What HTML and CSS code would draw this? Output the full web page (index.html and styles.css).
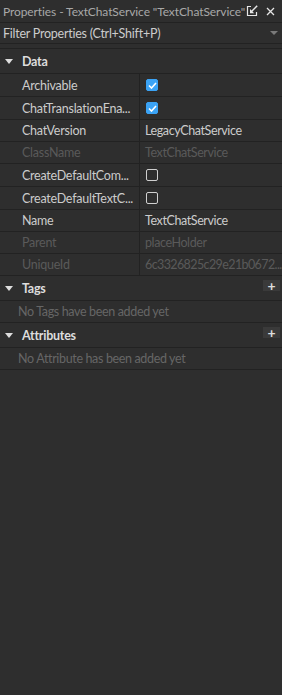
FILE: index.html
```html
<!DOCTYPE html>
<html>
<head>
<meta charset="utf-8">
<link rel="stylesheet" href="styles.css">
</head>
<body>
<div class="panel">
  <div class="titlebar">
    <span class="title">Properties - TextChatService "TextChatService"</span>
    <span class="title-icons">
      <svg class="ico" width="12" height="12" viewBox="0 0 12 12"><path d="M5 1.5H1.5V10.5H10.5V7" fill="none" stroke="#e6e6e6" stroke-width="1.2"/><path d="M11.2 0.8L5.5 6.5" stroke="#e6e6e6" stroke-width="1.5"/><path d="M4 4V8.2H8.2Z" fill="#e6e6e6"/></svg>
      <svg class="ico" width="9" height="9" viewBox="0 0 9 9"><path d="M1 1L8 8M8 1L1 8" stroke="#e6e6e6" stroke-width="1.3"/></svg>
    </span>
  </div>
  <div class="filter">
    <span class="ftext">Filter Properties (Ctrl+Shift+P)</span>
    <span class="drop"></span>
  </div>
  <div class="gap"></div>
  <div class="section">
    <span class="arrow"></span><span class="sec-title">Data</span>
  </div>
  <div class="row tall"><div class="name">Archivable</div><div class="value"><span class="cb on"><svg width="9" height="7" viewBox="0 0 9 7"><path d="M1 3.5L3.5 6L8 1" fill="none" stroke="#fff" stroke-width="1.6"/></svg></span></div></div>
  <div class="row tall"><div class="name">ChatTranslationEna...</div><div class="value"><span class="cb on"><svg width="9" height="7" viewBox="0 0 9 7"><path d="M1 3.5L3.5 6L8 1" fill="none" stroke="#fff" stroke-width="1.6"/></svg></span></div></div>
  <div class="row"><div class="name">ChatVersion</div><div class="value">LegacyChatService</div></div>
  <div class="row dis"><div class="name">ClassName</div><div class="value">TextChatService</div></div>
  <div class="row tall"><div class="name">CreateDefaultCom...</div><div class="value"><span class="cb"></span></div></div>
  <div class="row tall"><div class="name">CreateDefaultTextC...</div><div class="value"><span class="cb"></span></div></div>
  <div class="row"><div class="name">Name</div><div class="value">TextChatService</div></div>
  <div class="row dis"><div class="name">Parent</div><div class="value">placeHolder</div></div>
  <div class="row dis"><div class="name">UniqueId</div><div class="value uid">6c3326825c29e21b0672...</div></div>
  <div class="section">
    <span class="arrow"></span><span class="sec-title">Tags</span><span class="plus">+</span>
  </div>
  <div class="empty">No Tags have been added yet</div>
  <div class="section">
    <span class="arrow"></span><span class="sec-title">Attributes</span><span class="plus">+</span>
  </div>
  <div class="empty">No Attribute has been added yet</div>
</div>
</body>
</html>
```
FILE: styles.css
```css
html, body {
  margin: 0;
  padding: 0;
  background: #2e2e2e;
  height: 100%;
}
body {
  font-family: Lato, "Open Sans", sans-serif;
  font-size: 12.5px;
  letter-spacing: -0.25px;
  color: #cccccc;
}
.panel {
  width: 282px;
}
.titlebar {
  display: flex;
  align-items: center;
  padding-left: 3px;
  box-sizing: border-box;
  height: 23px;
  border-bottom: 1px solid #222;
  background: #2e2e2e;
}
.title {
  color: #a8a8a8;
  white-space: nowrap;
  flex: 1;
  font-size: 12px;
  letter-spacing: -0.1px;
}
.title-icons {
  display: flex;
  align-items: center;
  gap: 8px;
  padding-right: 7px;
}
.ico { display: block; }
.filter {
  height: 21px;
  box-sizing: border-box;
  border-bottom: 1px solid #222;
  display: flex;
  align-items: center;
  padding-left: 3px;
  padding-right: 4px;
  color: #cccccc;
}
.ftext { flex: 1; }
.drop {
  width: 0;
  height: 0;
  border-left: 4px solid transparent;
  border-right: 4px solid transparent;
  border-top: 4px solid #7a7a7a;
}
.gap {
  height: 5px;
  box-sizing: border-box;
  border-bottom: 1px solid #222;
}
.section {
  height: 25px;
  box-sizing: border-box;
  border-bottom: 1px solid #222;
  display: flex;
  align-items: center;
  padding-left: 5px;
  padding-right: 2px;
  background: #2e2e2e;
}
.arrow {
  width: 0;
  height: 0;
  border-left: 4px solid transparent;
  border-right: 4px solid transparent;
  border-top: 5px solid #dddddd;
  margin-right: 9px;
}
.sec-title {
  font-weight: bold;
  color: #dddddd;
  flex: 1;
}
.plus {
  width: 17px;
  height: 11px;
  background: #3a3a3a;
  color: #dddddd;
  font-weight: bold;
  font-size: 14px;
  line-height: 11px;
  text-align: center;
  align-self: flex-start;
  margin-top: 4px;
  letter-spacing: 0;
}
.row {
  display: grid;
  grid-template-columns: 140px 1fr;
  height: 22px;
  box-sizing: border-box;
  border-bottom: 1px solid #222;
}
.row.tall { height: 23px; }
.name {
  padding-left: 22px;
  border-right: 1px solid #222;
  display: flex;
  align-items: center;
  white-space: nowrap;
  overflow: hidden;
}
.value {
  padding-left: 5px;
  display: flex;
  align-items: center;
  white-space: nowrap;
  overflow: hidden;
  letter-spacing: -0.4px;
}
.value.uid { letter-spacing: -0.6px; }
.dis .name, .dis .value { color: #5a5a5a; }
.cb {
  width: 12px;
  height: 12px;
  box-sizing: border-box;
  border: 1px solid #d0d0d0;
  border-radius: 2px;
  display: flex;
  align-items: center;
  justify-content: center;
  margin-left: 1px;
}
.cb.on {
  background: #3ba3f5;
  border-color: #3ba3f5;
}
.empty {
  height: 22px;
  box-sizing: border-box;
  border-bottom: 1px solid #222;
  padding-left: 18px;
  display: flex;
  align-items: center;
  color: #666666;
  letter-spacing: -0.35px;
}
```
